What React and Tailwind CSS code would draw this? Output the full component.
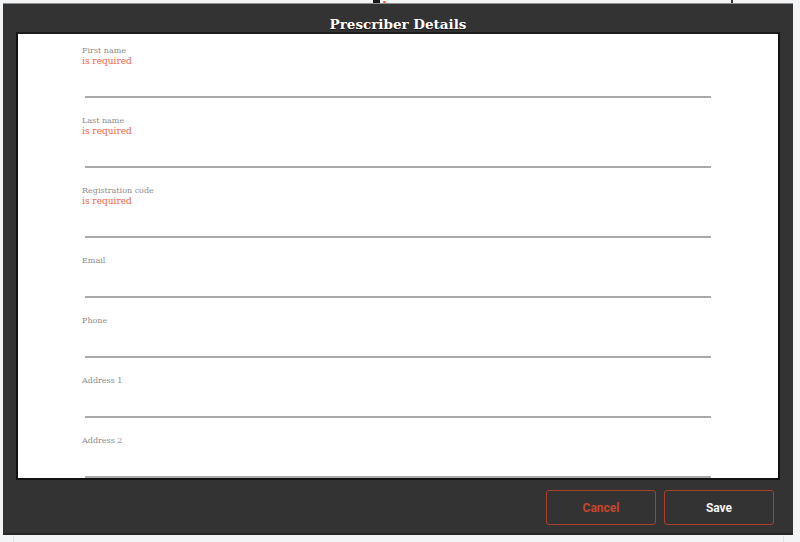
import React from 'react';

const slab = { fontFamily: '"DejaVu Serif", "Liberation Serif", serif' };
const sans = { fontFamily: 'Roboto, "Liberation Sans", sans-serif' };

const fields = [
    { label: 'First name', required: true },
    { label: 'Last name', required: true },
    { label: 'Registration code', required: true },
    { label: 'Email' },
    { label: 'Phone' },
    { label: 'Address 1' },
    { label: 'Address 2' },
];

const Field = ({ label, required }) => (
    <div className="mb-[18px]">
        <div className="text-[8px] leading-[10px] text-[#8c8c8c]" style={slab}>{label}</div>
        {required && (
            <div className="text-[9px] leading-[10px] text-[#f0643f]" style={slab}>is required</div>
        )}
        <div className="ml-[3px] h-[32px] border-b-2 border-[#a9a9a9]" />
    </div>
);

const App = () => {
    return (
        <div className="relative w-[800px] h-[542px] overflow-hidden bg-[#f3f4f6]">
            {/* bits of the page peeking out above the dialog */}
            <div className="absolute left-[373px] top-0 w-[7px] h-[3px] bg-[#1a1a1a]" />
            <div className="absolute left-[383px] top-[1px] w-[3px] h-[2px] rounded-full bg-[#f0643f]" />
            <div className="absolute left-[731px] top-0 w-[2px] h-[3px] bg-[#333]" />

            <div className="ml-[3px] mt-[3px] w-[790px] h-[532px] bg-[#333333] border-t border-[#8f8f8f] border-b-2 border-b-[#262626] flex flex-col">
                <div className="h-[28px] flex items-center justify-center pt-[14px]">
                    <h1
                        className="text-[13.5px] font-bold text-white leading-none [text-shadow:0_1px_1px_rgba(0,0,0,0.6)]"
                        style={slab}
                    >
                        Prescriber Details
                    </h1>
                </div>

                <div className="ml-[13px] w-[764px] h-[448px] bg-white border-2 border-[#111] border-t-[#1c1c1c] overflow-hidden">
                    <div className="pt-[12px] pl-[64px] pr-[67px]">
                        {fields.map((f) => (
                            <Field key={f.label} label={f.label} required={f.required} />
                        ))}
                    </div>
                </div>

                <div className="flex justify-end gap-[8px] pr-[19px] mt-[10px]">
                    <button
                        className="w-[110px] h-[35px] rounded-[3px] border-[1.5px] border-[#a8402a] text-[12px] font-bold text-[#c4462c]"
                        style={sans}
                    >
                        Cancel
                    </button>
                    <button
                        className="w-[110px] h-[35px] rounded-[3px] border-[1.5px] border-[#a8402a] text-[12px] font-bold text-[#f2f2f2]"
                        style={sans}
                    >
                        Save
                    </button>
                </div>
            </div>

            <div className="absolute left-[13px] bottom-0 w-px h-[6px] bg-[#dde3ea]" />
            <div className="absolute left-[783px] bottom-0 w-px h-[6px] bg-[#dde3ea]" />
        </div>
    );
};

export default App;
